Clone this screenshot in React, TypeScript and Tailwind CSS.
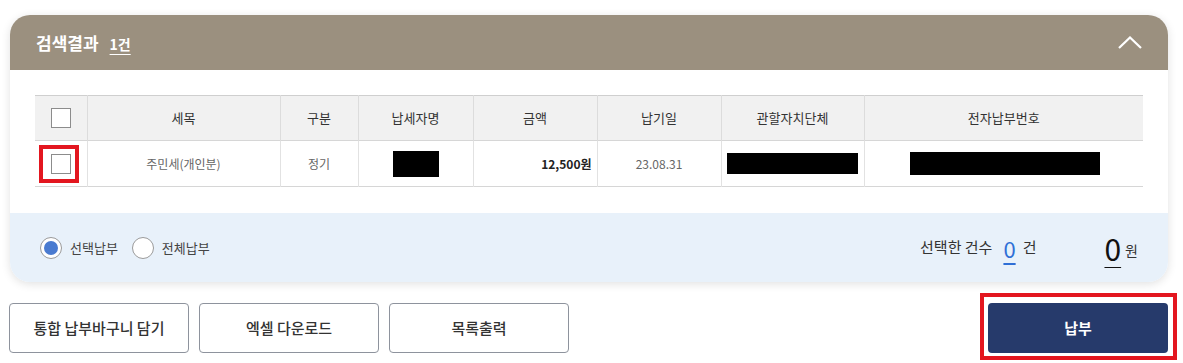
import React, { useState } from 'react';

const columns = [
  { label: '세목', width: 'w-[193px]' },
  { label: '구분', width: 'w-[78px]' },
  { label: '납세자명', width: 'w-[115px]' },
  { label: '금액', width: 'w-[124px]' },
  { label: '납기일', width: 'w-[124px]' },
  { label: '관할자치단체', width: 'w-[143px]' },
  { label: '전자납부번호', width: 'w-[279px]' },
];

const Checkbox: React.FC = () => (
  <span className="block w-5 h-5 mx-auto border border-[#8c8c8c] bg-white" />
);

const Radio: React.FC<{ checked?: boolean; label: string }> = ({ checked, label }) => (
  <label className="flex items-center gap-2">
    <span className="flex items-center justify-center w-[22px] h-[22px] rounded-full border border-[#9a9a9a] bg-white">
      {checked && <span className="w-[14px] h-[14px] rounded-full bg-[#4a7bd0]" />}
    </span>
    <span className="text-[13px] text-[#444]">{label}</span>
  </label>
);

const App: React.FC = () => {
  const [mode, setMode] = useState<'select' | 'all'>('select');

  return (
    <div
      className="w-[1183px] h-[363px] bg-white pt-[15px] pl-[10px]"
      style={{ fontFamily: '"Noto Sans CJK KR", "Noto Sans", sans-serif' }}
    >
      {/* 검색결과 카드 */}
      <div className="w-[1158px] rounded-[20px] overflow-hidden bg-white shadow-[0_2px_10px_rgba(0,0,0,0.12)]">
        <div className="h-[55px] bg-[#9b907f] flex items-center justify-between pl-[26px] pr-[26px]">
          <div className="flex items-baseline gap-[11px] text-white">
            <h2 className="text-[17px] font-bold">검색결과</h2>
            <span className="text-[14px] font-bold underline underline-offset-4">1건</span>
          </div>
          <svg width="24" height="13" viewBox="0 0 24 13" fill="none" stroke="white" strokeWidth="2.2">
            <path d="M1 12L12 1.5L23 12" />
          </svg>
        </div>

        <div className="px-[25px] pt-[25px] pb-[26px]">
          <table className="table-fixed w-[1108px] border-collapse text-center border-t border-[#cfcfcf]">
            <thead>
              <tr className="h-[45px] bg-[#f1f1f1] border-b border-[#d6d6d6]">
                <th className="w-[52px] border-r border-[#dcdcdc]">
                  <Checkbox />
                </th>
                {columns.map((col, i) => (
                  <th
                    key={col.label}
                    className={`${col.width} text-[13px] font-normal text-[#333] ${
                      i < columns.length - 1 ? 'border-r border-[#dcdcdc]' : ''
                    }`}
                  >
                    {col.label}
                  </th>
                ))}
              </tr>
            </thead>
            <tbody>
              <tr className="h-[46px] border-b border-[#d6d6d6] text-[12px] text-[#666]">
                <td className="border-r border-[#e2e2e2]">
                  <div className="relative w-5 mx-auto">
                    <Checkbox />
                    <span className="absolute -left-[12px] -right-[8px] -top-[9px] -bottom-[9px] border-4 border-[#e3161f]" />
                  </div>
                </td>
                <td className="border-r border-[#e2e2e2]">주민세(개인분)</td>
                <td className="border-r border-[#e2e2e2]">정기</td>
                <td className="border-r border-[#e2e2e2]">
                  <span className="block w-[46px] h-[26px] bg-black mx-auto" />
                </td>
                <td className="border-r border-[#e2e2e2] text-right pr-[5px] font-bold text-[#222]">12,500원</td>
                <td className="border-r border-[#e2e2e2]">23.08.31</td>
                <td className="border-r border-[#e2e2e2]">
                  <span className="block w-[131px] h-[21px] bg-black mx-auto" />
                </td>
                <td className="text-left pl-[45px]">
                  <span className="block w-[190px] h-[23px] bg-black" />
                </td>
              </tr>
            </tbody>
          </table>
        </div>

        <div className="h-[69px] bg-[#e8f1fa] flex items-center justify-between pl-[30px] pr-[30px]">
          <div className="flex items-center gap-[14px]" onClick={() => setMode(mode === 'select' ? 'all' : 'select')}>
            <Radio checked={mode === 'select'} label="선택납부" />
            <Radio checked={mode === 'all'} label="전체납부" />
          </div>
          <div className="flex items-center">
            <span className="text-[15px] text-[#333]">선택한 건수</span>
            <span className="ml-[11px] text-[22px] leading-none text-[#2f6fd6] underline underline-offset-[5px]">0</span>
            <span className="ml-[7px] text-[15px] text-[#333]">건</span>
            <span className="ml-[68px] text-[30px] leading-none text-[#111] underline underline-offset-[6px] decoration-1">0</span>
            <span className="ml-[4px] text-[14px] text-[#333] self-end mb-[2px]">원</span>
          </div>
        </div>
      </div>

      {/* 하단 버튼 */}
      <div className="w-[1158px] mt-[21px] flex items-center justify-between">
        <div className="flex gap-[10px] -ml-px">
          {['통합 납부바구니 담기', '엑셀 다운로드', '목록출력'].map((label) => (
            <button
              key={label}
              className="w-[180px] h-[50px] rounded-[4px] border border-[#8e939d] bg-white text-[15px] font-medium text-[#333]"
            >
              {label}
            </button>
          ))}
        </div>
        <div className="relative">
          <button className="w-[180px] h-[50px] rounded-[4px] bg-[#263a6b] text-white text-[15px] font-bold">
            납부
          </button>
          <span className="absolute -left-[8px] -right-[9px] -top-[10px] -bottom-[7px] border-4 border-[#e3161f]" />
        </div>
      </div>
    </div>
  );
};

export default App;
